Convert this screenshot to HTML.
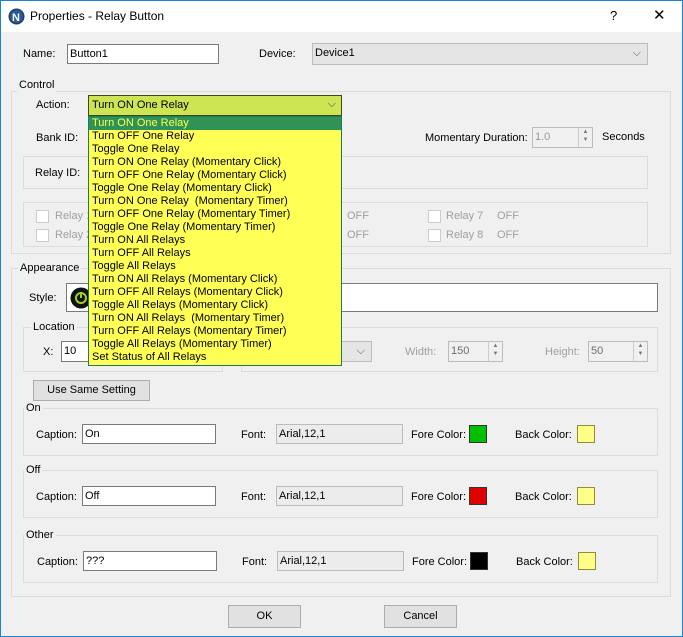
<!DOCTYPE html>
<html><head><meta charset="utf-8"><style>
*{box-sizing:border-box;margin:0;padding:0}
body{width:683px;height:637px;overflow:hidden;background:#fff;font-family:"Liberation Sans",sans-serif;font-size:11px;color:#000;position:relative}
.a{position:absolute;white-space:nowrap}
.win{position:absolute;left:0;top:0;width:683px;height:637px;border:1px solid #1883d7;background:#f0f0f0}
.tb{position:absolute;left:1px;top:1px;width:681px;height:31px;background:#fff}
.grp{position:absolute;border:1px solid #dcdcdc}
.gl{position:absolute;background:#f0f0f0;padding:0 2px;line-height:13px}
.inp{position:absolute;background:#fff;border:1px solid #7a7a7a;padding:1px 2px;line-height:16px}
.dis{position:absolute;background:#f0f0f0;border:1px solid #bcbcbc;color:#6d6d6d;padding:1px 2px;line-height:16px}
.btn{position:absolute;background:#e1e1e1;border:1px solid #adadad;text-align:center;line-height:18px}
.sw{position:absolute;width:18px;height:18px;border:1px solid #333}
.cb{position:absolute;width:13px;height:13px;border:1px solid #ccc;background:#fff}
.g{color:#a0a0a0}
.list{position:absolute;left:88px;top:116px;width:254px;height:250px;background:#ffff55;border:1px solid #1e7a5a;}
.list div{height:13px;line-height:13px;padding-left:3px;color:#000;font-size:11px;white-space:nowrap}
.list div.s{background:#2e9355;color:#ffff55}
.spin{position:absolute;width:14px;border-left:1px solid #ccc;right:0;top:0;bottom:0;font-size:6px;color:#777;text-align:center;line-height:8px}
</style></head><body>
<div class="win"></div>
<div class="tb"></div>
<svg class="a" style="left:8px;top:8px" width="17" height="17"><circle cx="8.5" cy="8.5" r="8" fill="#1c3f6e"/><circle cx="8.5" cy="8.5" r="6.5" fill="#2a5b96"/><text x="4" y="13" font-size="11" font-weight="bold" fill="#fff" font-family="Liberation Sans">N</text></svg>
<div class="a" style="left:30px;top:9px;font-size:12px">Properties - Relay Button</div>
<div class="a" style="left:610px;top:8px;font-size:13px">?</div>
<div class="a" style="left:653px;top:6px;font-size:15px">✕</div>

<div class="a" style="left:23px;top:48px">Name:</div>
<div class="inp" style="left:67px;top:44px;width:152px;height:20px">Button1</div>
<div class="a" style="left:259px;top:48px">Device:</div>
<div class="dis" style="left:312px;top:43px;width:336px;height:22px;color:#000;background:#e5e5e5;line-height:17px">Device1<span style="position:absolute;right:6px;top:1px;color:#555">⌵</span></div>

<div class="grp" style="left:11px;top:91px;width:660px;height:163px"></div>
<div class="gl" style="left:17px;top:79px">Control</div>
<div class="a" style="left:36px;top:99px">Action:</div>
<div class="a" style="left:88px;top:95px;width:254px;height:21px;background:#cde553;border:1px solid #3c4a1a;padding:2px 3px;line-height:15px">Turn ON One Relay<span style="position:absolute;right:5px;top:1px;color:#444">⌵</span></div>
<div class="a" style="left:36px;top:132px">Bank ID:</div>
<div class="a" style="left:425px;top:132px">Momentary Duration:</div>
<div class="dis" style="left:532px;top:127px;width:61px;height:21px;color:#999">1.0<div class="spin">▲<br>▼</div></div>
<div class="a" style="left:602px;top:131px">Seconds</div>
<div class="grp" style="left:23px;top:156px;width:625px;height:33px"></div>
<div class="a" style="left:35px;top:167px">Relay ID:</div>
<div class="grp" style="left:23px;top:202px;width:625px;height:45px"></div>
<div class="cb" style="left:36px;top:210px"></div><div class="a g" style="left:55px;top:210px">Relay 1</div>
<div class="cb" style="left:36px;top:229px"></div><div class="a g" style="left:55px;top:229px">Relay 2</div>
<div class="a g" style="left:347px;top:210px">OFF</div><div class="a g" style="left:347px;top:229px">OFF</div>
<div class="cb" style="left:428px;top:210px"></div><div class="a g" style="left:446px;top:210px">Relay 7</div><div class="a g" style="left:497px;top:210px">OFF</div>
<div class="cb" style="left:428px;top:229px"></div><div class="a g" style="left:446px;top:229px">Relay 8</div><div class="a g" style="left:497px;top:229px">OFF</div>

<div class="grp" style="left:11px;top:268px;width:660px;height:329px"></div>
<div class="gl" style="left:18px;top:262px">Appearance</div>
<div class="a" style="left:29px;top:292px">Style:</div>
<div class="inp" style="left:66px;top:283px;width:592px;height:29px"></div>
<svg class="a" style="left:70px;top:287px" width="22" height="22"><circle cx="11" cy="11" r="10.5" fill="#111"/><circle cx="11" cy="11" r="5" fill="none" stroke="#9fd11a" stroke-width="2"/><line x1="11" y1="5" x2="11" y2="11" stroke="#9fd11a" stroke-width="2"/></svg>
<div class="grp" style="left:23px;top:327px;width:200px;height:45px"></div>
<div class="gl" style="left:31px;top:321px">Location</div>
<div class="grp" style="left:241px;top:327px;width:417px;height:45px"></div>
<div class="a" style="left:43px;top:346px">X:</div>
<div class="inp" style="left:61px;top:341px;width:30px;height:21px">10</div>
<div class="dis" style="left:320px;top:341px;width:52px;height:21px;background:#e5e5e5"><span style="position:absolute;right:6px;top:1px;color:#555">⌵</span></div>
<div class="a g" style="left:405px;top:346px">Width:</div>
<div class="dis" style="left:448px;top:341px;width:55px;height:21px">150<div class="spin">▲<br>▼</div></div>
<div class="a g" style="left:545px;top:346px">Height:</div>
<div class="dis" style="left:588px;top:341px;width:60px;height:21px">50<div class="spin">▲<br>▼</div></div>
<div class="btn" style="left:33px;top:380px;width:117px;height:21px">Use Same Setting</div>

<div class="grp" style="left:23px;top:408px;width:635px;height:48px"></div>
<div class="gl" style="left:24px;top:402px">On</div>
<div class="a" style="left:36px;top:429px">Caption:</div>
<div class="inp" style="left:82px;top:424px;width:134px;height:20px">On</div>
<div class="a" style="left:241px;top:429px">Font:</div>
<div class="dis" style="left:276px;top:424px;width:127px;height:20px;color:#000;background:#ececec">Arial,12,1</div>
<div class="a" style="left:411px;top:429px">Fore Color:</div>
<div class="sw" style="left:469px;top:425px;background:#00c000"></div>
<div class="a" style="left:515px;top:429px">Back Color:</div>
<div class="sw" style="left:577px;top:425px;background:#ffff88;border-color:#8f8f3a"></div>

<div class="grp" style="left:23px;top:470px;width:635px;height:48px"></div>
<div class="gl" style="left:24px;top:464px">Off</div>
<div class="a" style="left:36px;top:491px">Caption:</div>
<div class="inp" style="left:82px;top:486px;width:134px;height:20px">Off</div>
<div class="a" style="left:241px;top:491px">Font:</div>
<div class="dis" style="left:276px;top:486px;width:127px;height:20px;color:#000;background:#ececec">Arial,12,1</div>
<div class="a" style="left:411px;top:491px">Fore Color:</div>
<div class="sw" style="left:469px;top:487px;background:#e00000"></div>
<div class="a" style="left:515px;top:491px">Back Color:</div>
<div class="sw" style="left:577px;top:487px;background:#ffff88;border-color:#8f8f3a"></div>

<div class="grp" style="left:23px;top:535px;width:635px;height:48px"></div>
<div class="gl" style="left:24px;top:529px">Other</div>
<div class="a" style="left:37px;top:556px">Caption:</div>
<div class="inp" style="left:83px;top:551px;width:134px;height:20px">???</div>
<div class="a" style="left:242px;top:556px">Font:</div>
<div class="dis" style="left:277px;top:551px;width:127px;height:20px;color:#000;background:#ececec">Arial,12,1</div>
<div class="a" style="left:412px;top:556px">Fore Color:</div>
<div class="sw" style="left:470px;top:552px;background:#000"></div>
<div class="a" style="left:516px;top:556px">Back Color:</div>
<div class="sw" style="left:578px;top:552px;background:#ffff88;border-color:#8f8f3a"></div>

<div class="btn" style="left:228px;top:605px;width:73px;height:23px;line-height:21px">OK</div>
<div class="btn" style="left:384px;top:605px;width:73px;height:23px;line-height:21px">Cancel</div>

<div class="list">
<div class="s">Turn ON One Relay</div>
<div>Turn OFF One Relay</div>
<div>Toggle One Relay</div>
<div>Turn ON One Relay (Momentary Click)</div>
<div>Turn OFF One Relay (Momentary Click)</div>
<div>Toggle One Relay (Momentary Click)</div>
<div>Turn ON One Relay &nbsp;(Momentary Timer)</div>
<div>Turn OFF One Relay (Momentary Timer)</div>
<div>Toggle One Relay (Momentary Timer)</div>
<div>Turn ON All Relays</div>
<div>Turn OFF All Relays</div>
<div>Toggle All Relays</div>
<div>Turn ON All Relays (Momentary Click)</div>
<div>Turn OFF All Relays (Momentary Click)</div>
<div>Toggle All Relays (Momentary Click)</div>
<div>Turn ON All Relays &nbsp;(Momentary Timer)</div>
<div>Turn OFF All Relays (Momentary Timer)</div>
<div>Toggle All Relays (Momentary Timer)</div>
<div>Set Status of All Relays</div>
</div>
</body></html>
